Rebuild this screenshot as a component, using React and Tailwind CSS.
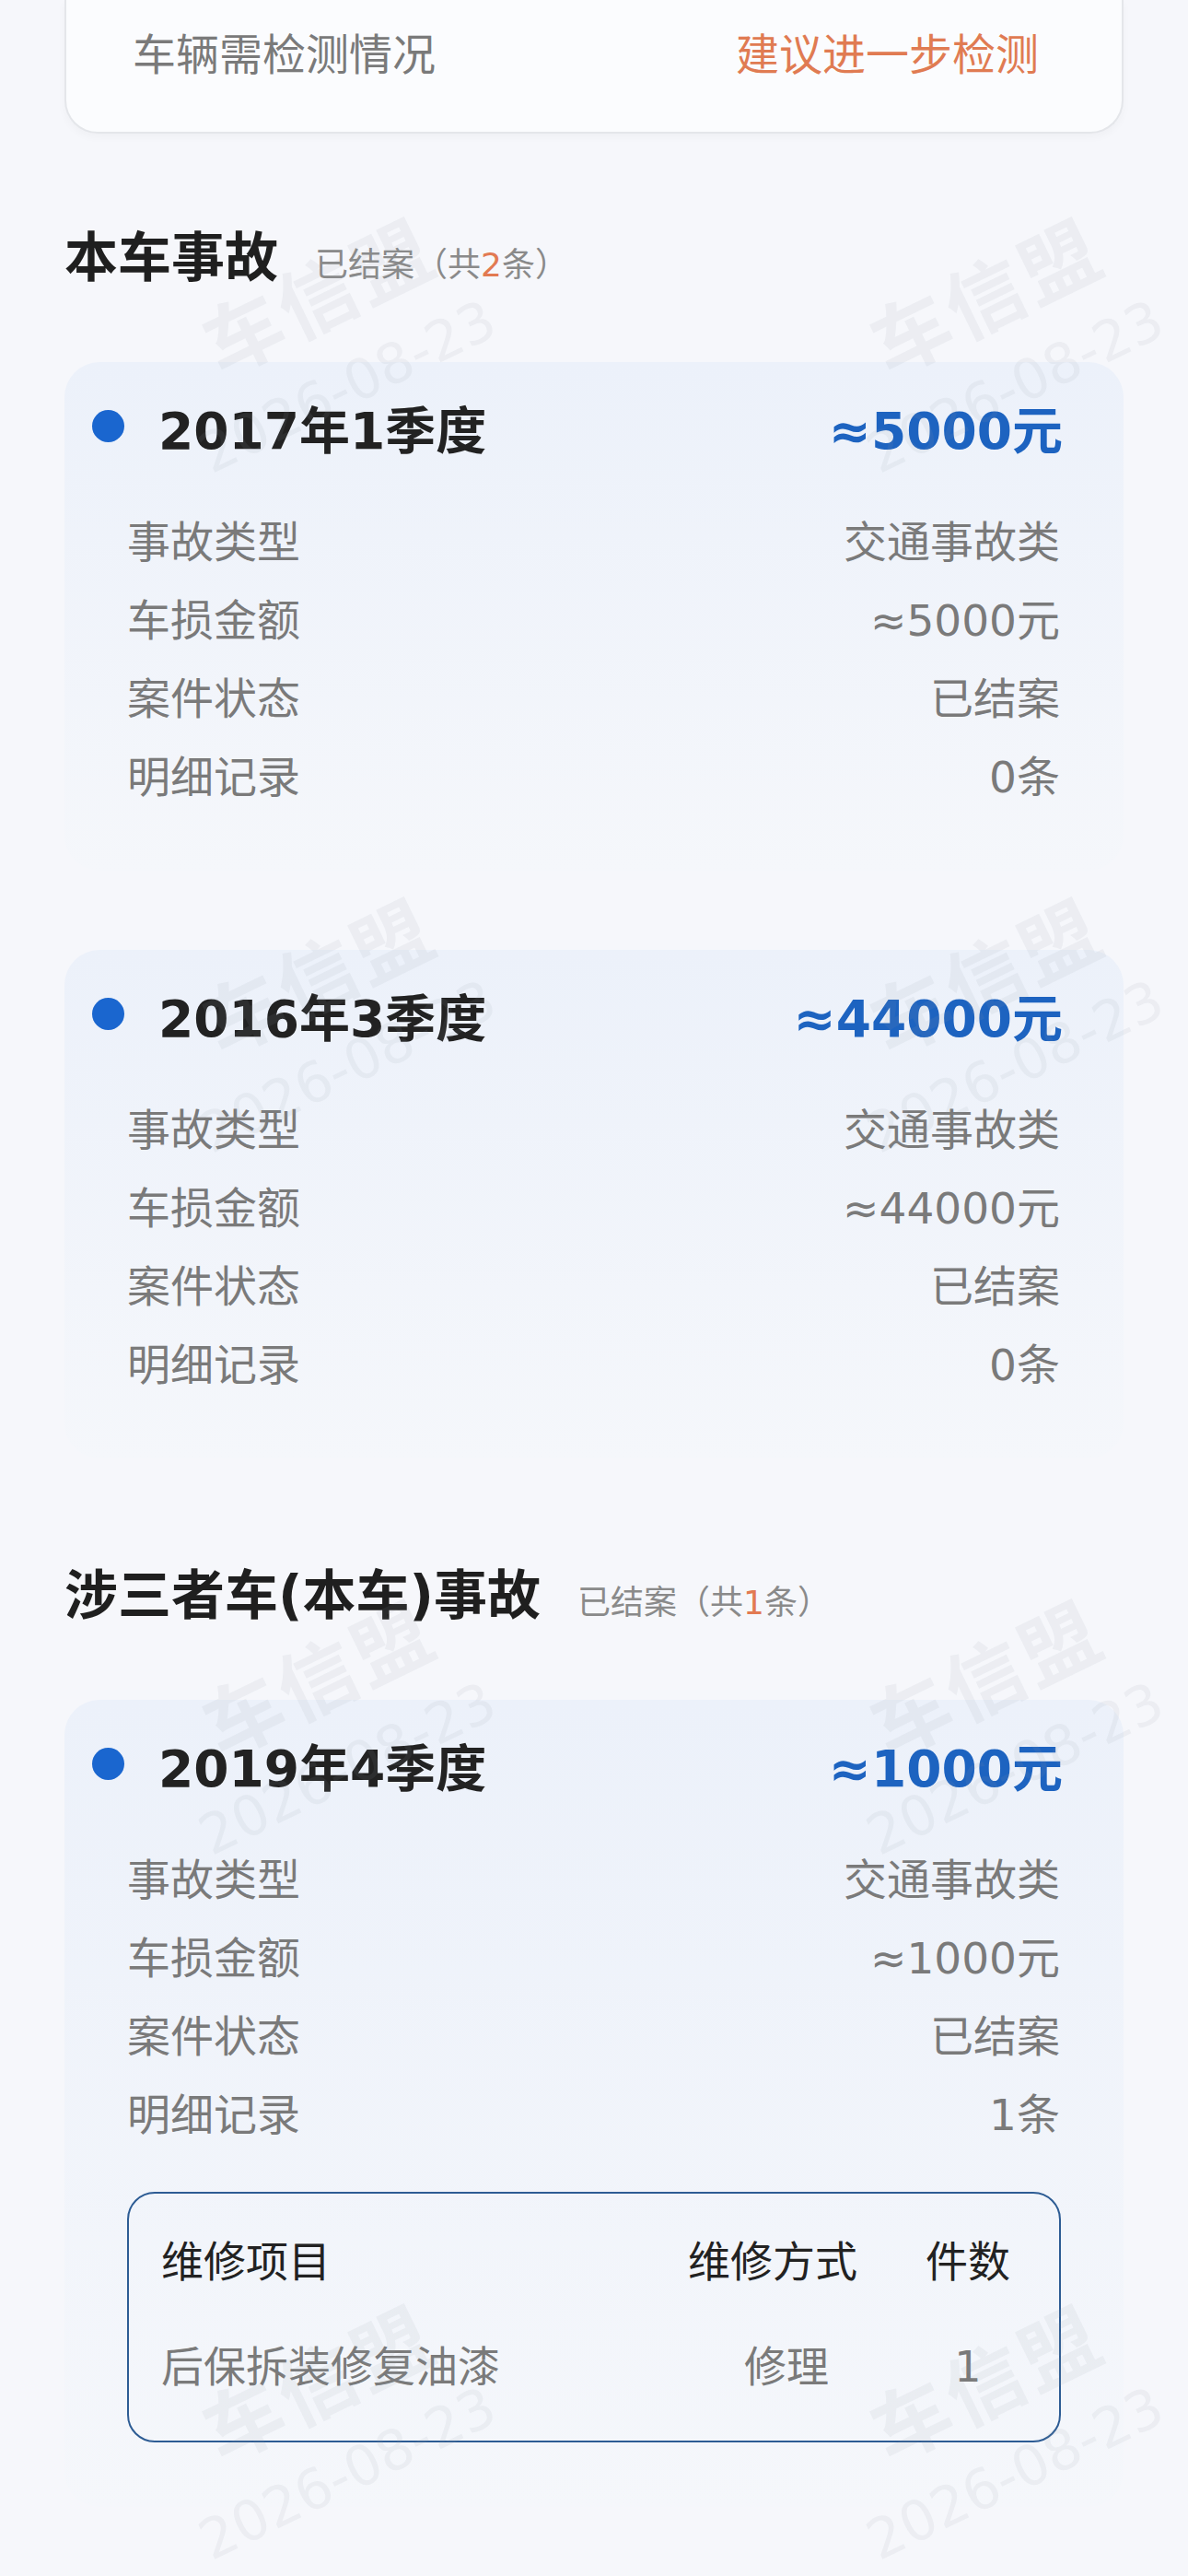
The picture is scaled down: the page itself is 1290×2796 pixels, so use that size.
import React from 'react';

const incidents = [
  { title: '2017年1季度', amount: '≈5000元', type: '交通事故类', damage: '≈5000元', status: '已结案', records: '0条' },
  { title: '2016年3季度', amount: '≈44000元', type: '交通事故类', damage: '≈44000元', status: '已结案', records: '0条' },
];

const thirdParty = {
  title: '2019年4季度',
  amount: '≈1000元',
  type: '交通事故类',
  damage: '≈1000元',
  status: '已结案',
  records: '1条',
  repairs: [{ item: '后保拆装修复油漆', way: '修理', count: '1' }],
};

// watermark centres, two per row
const marks = [
  [353, 370], [1078, 370],
  [353, 1108], [1078, 1108],
  [353, 1870], [1078, 1870],
  [353, 2635], [1078, 2635],
];

const SectionTitle = ({ title, count, className }) => (
  <div className={`flex items-baseline ${className}`}>
    <h2 className="text-[58px] font-bold leading-[73px] text-[#1f1f1f]">{title}</h2>
    <span className="ml-[40px] text-[36px] text-[#8a8a8a]">
      已结案（共<span className="text-[#e27a52]">{count}</span>条）
    </span>
  </div>
);

const Row = ({ label, value }) => (
  <div className="flex h-[85px] items-center justify-between pl-[38px] pr-[3px] text-[47px] text-[#7a7a7a]">
    <span>{label}</span>
    <span>{value}</span>
  </div>
);

const IncidentCard = ({ data, className, children }) => (
  <div className={`rounded-[38px] bg-gradient-to-b from-[#ecf1fa] to-[#f5f7fb] pl-[30px] pr-[66px] pt-[39px] ${className}`}>
    {/* header: dot + quarter + amount */}
    <div className="flex items-start">
      <div className="mt-[13px] h-[35px] w-[35px] shrink-0 rounded-full bg-[#1a66cf]"></div>
      <div className="ml-[37px] text-[55px] font-bold leading-[73px] text-[#222]">{data.title}</div>
      <div className="ml-auto text-[55px] font-bold leading-[73px] text-[#1d63c0]">{data.amount}</div>
    </div>
    <div className="mt-[42px]">
      <Row label="事故类型" value={data.type} />
      <Row label="车损金额" value={data.damage} />
      <Row label="案件状态" value={data.status} />
      <Row label="明细记录" value={data.records} />
    </div>
    {children}
  </div>
);

export default function App() {
  return (
    <div className="relative min-h-screen w-[1290px] overflow-hidden bg-[#f6f7fb] font-['DejaVu_Sans','Noto_Sans_CJK_SC',sans-serif]">
      <div className="px-[70px] pb-[120px]">
        {/* top summary card, cut off by the screen edge */}
        <div className="flex h-[145px] items-start justify-between rounded-b-[36px] border-x-2 border-b-2 border-[#e4e6ea] bg-[#fbfcfe] pl-[72px] pr-[90px] pt-[28px] shadow-[0_4px_10px_rgba(0,0,0,0.03)]">
          <span className="text-[47px] leading-[64px] text-[#7a7a7a]">车辆需检测情况</span>
          <span className="text-[47px] leading-[64px] text-[#e07b52]">建议进一步检测</span>
        </div>

        <SectionTitle title="本车事故" count="2" className="mt-[99px]" />

        <IncidentCard data={incidents[0]} className="mt-[76px] pb-[58px]" />
        <IncidentCard data={incidents[1]} className="mt-[86px] pb-[58px]" />

        <SectionTitle title="涉三者车(本车)事故" count="1" className="mt-[113px]" />

        <IncidentCard data={thirdParty} className="mt-[76px] pb-[70px]">
          <div className="ml-[38px] mr-[2px] mt-[40px] rounded-[30px] border-2 border-[#2d5c94] pb-[46px] pl-[35px] pr-[24px] pt-[40px]">
            <div className="grid h-[68px] grid-cols-[1fr_220px_150px] items-center gap-x-[12px] text-[46px] text-[#222]">
              <span>维修项目</span>
              <span className="pr-[30px] text-center">维修方式</span>
              <span className="text-center">件数</span>
            </div>
            {thirdParty.repairs.map((r) => (
              <div key={r.item} className="mt-[46px] grid h-[68px] grid-cols-[1fr_220px_150px] items-center gap-x-[12px] text-[46px] text-[#7a7a7a]">
                <span>{r.item}</span>
                <span className="text-center">{r.way}</span>
                <span className="text-center">{r.count}</span>
              </div>
            ))}
          </div>
        </IncidentCard>
      </div>

      {/* watermark overlay */}
      <div className="pointer-events-none absolute inset-0">
        {marks.map(([x, y], i) => (
          <div
            key={i}
            className="absolute flex -translate-x-1/2 -translate-y-1/2 -rotate-[26deg] flex-col items-center gap-[20px] text-[rgba(150,155,165,0.1)]"
            style={{ left: x, top: y }}
          >
            <span className="ml-[30px] whitespace-nowrap text-[85px] font-bold leading-[90px] tracking-[4px]">车信盟</span>
            <span className="whitespace-nowrap text-[60px] leading-[66px]">2026-08-23</span>
          </div>
        ))}
      </div>
    </div>
  );
}
